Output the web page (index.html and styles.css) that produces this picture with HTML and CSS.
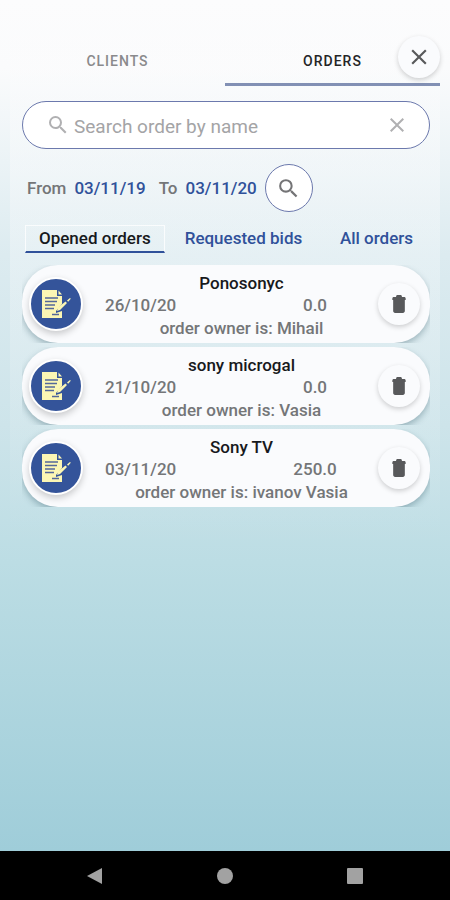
FILE: index.html
```html
<!DOCTYPE html>
<html lang="en">
<head>
<meta charset="utf-8">
<meta name="viewport" content="width=device-width, initial-scale=1">
<title>Orders</title>
<link rel="stylesheet" href="styles.css">
</head>
<body>
<svg class="defs" width="0" height="0" aria-hidden="true">
  <symbol id="search" viewBox="0 0 24 24"><path d="M15.5 14h-.79l-.28-.27A6.47 6.47 0 0 0 16 9.5 6.5 6.5 0 1 0 9.500 16c1.610 0 3.090-.59 4.230-1.570l.27.28v.79l5 4.990L20.490 19l-4.990-5zm-6 0C7.010 14 5 11.990 5 9.500S7.010 5 9.500 5 14 7.010 14 9.500 11.990 14 9.500 14z"/></symbol>
  <symbol id="close" viewBox="0 0 24 24"><path d="M19 6.410 17.590 5 12 10.590 6.410 5 5 6.410 10.590 12 5 17.590 6.410 19 12 13.410 17.590 19 19 17.590 13.410 12z"/></symbol>
  <symbol id="trash" viewBox="0 0 24 24"><path d="M4 5.500c0-1.500 1-2 2-2h2.500V3c0-1 .7-1.800 1.700-1.800h3.600c1 0 1.700.8 1.700 1.800v.5H18c1 0 2 .5 2 2v1.700H4zM5 7.200h14v13.300c0 1.300-1 2.300-2.300 2.300H7.300C6 22.800 5 21.800 5 20.500z"/></symbol>
  <symbol id="note" viewBox="0 0 30 30">
    <path class="paper" d="M1 1h15v6h5v8l-6 7v2l6-2v7H1z"/>
    <path class="paper" d="M17.500 1.500 21 5.500h-3.500z"/>
    <path class="ink" d="M4 9h13M4 12.500h12M4 16h10M4 19.500h9M11 25.500h7"/>
    <path class="pen" d="M17 18.500l7.500-6 1.500 1.500-7 7-3 1zM26 11.500l3-2.500.8.800-2.600 3z"/>
  </symbol>
</svg>
<main class="screen">
  <section class="panel">
    <nav class="tabs">
      <button class="tab" type="button">CLIENTS</button>
      <button class="tab tab-active" type="button">ORDERS</button>
      <button class="round close" type="button" aria-label="Close"><svg><use href="#close"/></svg></button>
    </nav>
    <div class="content">
      <form class="search">
        <svg><use href="#search"/></svg>
        <input type="text" placeholder="Search order by name" aria-label="Search order by name">
        <button type="button" aria-label="Clear search"><svg><use href="#close"/></svg></button>
      </form>
      <div class="range">
        <span>From</span><button class="date" type="button">03/11/19</button>
        <span class="to">To</span><button class="date" type="button">03/11/20</button>
        <button class="find" type="button" aria-label="Find by date"><svg><use href="#search"/></svg></button>
      </div>
      <div class="filters">
        <button class="filter filter-active" type="button">Opened orders</button>
        <button class="filter" type="button">Requested bids</button>
        <button class="filter filter-all" type="button">All orders</button>
      </div>
      <ul class="orders">
        <li class="slot"><article class="card">
          <span class="badge"><svg><use href="#note"/></svg></span>
          <div class="info"><h2>Ponosonyc</h2><p class="row"><time>26/10/20</time><span class="sum">0.0</span></p><p>order owner is: Mihail</p></div>
          <button class="round" type="button" aria-label="Delete Ponosonyc"><svg><use href="#trash"/></svg></button>
        </article></li>
        <li class="slot"><article class="card">
          <span class="badge"><svg><use href="#note"/></svg></span>
          <div class="info"><h2>sony microgal</h2><p class="row"><time>21/10/20</time><span class="sum">0.0</span></p><p>order owner is: Vasia</p></div>
          <button class="round" type="button" aria-label="Delete sony microgal"><svg><use href="#trash"/></svg></button>
        </article></li>
        <li class="slot"><article class="card">
          <span class="badge"><svg><use href="#note"/></svg></span>
          <div class="info"><h2>Sony TV</h2><p class="row"><time>03/11/20</time><span class="sum">250.0</span></p><p>order owner is: ivanov Vasia</p></div>
          <button class="round" type="button" aria-label="Delete Sony TV"><svg><use href="#trash"/></svg></button>
        </article></li>
      </ul>
    </div>
  </section>
</main>
<footer class="system">
  <button type="button" aria-label="Back"><svg viewBox="0 0 18 18"><path d="M1 9 16 1v16z"/></svg></button>
  <button type="button" aria-label="Home"><svg viewBox="0 0 18 18"><circle cx="9" cy="9" r="8"/></svg></button>
  <button type="button" aria-label="Recent apps"><svg viewBox="0 0 18 18"><rect x="1" y="1" width="16" height="16" rx="1"/></svg></button>
</footer>
</body>
</html>
```
FILE: styles.css
```css
* { box-sizing: border-box; }
body {
  margin: 0;
  min-height: 100vh;
  display: flex;
  flex-direction: column;
  font: 500 17px/22px Roboto, sans-serif;
  color: #747678;
}
button {
  border: 0;
  padding: 0;
  background: none;
  font: inherit;
  color: inherit;
}
svg { display: block; fill: currentColor; }
.defs { position: absolute; }
.screen {
  flex: 1;
  padding: 36px 10px 0;
  background: linear-gradient(#fcfcfd 0%, #fafbfc 8%, #dcebf0 30%, #cde4ea 50%, #bcdde4 66%, #9fcdd9 100%);
}
.panel {
  padding-bottom: 40px;
  background: linear-gradient(rgba(252, 252, 253, .3), rgba(252, 252, 253, .4) 20%, rgba(252, 252, 253, .2) 60%, rgba(252, 252, 253, 0));
}
.tabs { display: flex; position: relative; height: 50px; }
.tab {
  flex: 1;
  padding-top: 2px;
  font-size: 14px;
  letter-spacing: 1px;
  color: #8a8a8c;
  border-bottom: 3px solid transparent;
}
.tab-active { color: #252527; border-color: #8290b4; }
.round {
  flex: none;
  display: grid;
  place-items: center;
  width: 42px;
  height: 42px;
  border-radius: 50%;
  background: #fafbfd;
  color: #58595b;
  box-shadow: 0 2px 5px rgba(0, 0, 0, .18);
}
.round svg { width: 20px; height: 20px; }
.close { position: absolute; top: 0; right: 0; }
.close svg { width: 26px; height: 26px; }
.content { padding: 15px 10px 0 12px; }
.search {
  display: flex;
  align-items: center;
  height: 48px;
  padding: 0 20px 0 23px;
  border: 1px solid #6c79ad;
  border-radius: 24px;
  background: #fff;
  color: #b0b0b2;
}
.search svg { width: 24px; height: 24px; }
.search input {
  flex: 1;
  min-width: 0;
  border: 0;
  padding: 4px 4px 0;
  background: none;
  font: 400 19px/24px Roboto, sans-serif;
  outline: 0;
}
.search input::placeholder { color: #a4a4a6; opacity: 1; }
.range { display: flex; align-items: center; gap: 8px; margin-top: 15px; padding-left: 5px; }
.date, .filter { color: #30519a; }
.to { margin-left: 5px; }
.find {
  display: grid;
  place-items: center;
  width: 48px;
  height: 48px;
  border: 1px solid #6c79ad;
  border-radius: 50%;
  background: #fff;
  color: #747476;
}
.find svg { width: 25px; height: 25px; }
.filters { display: flex; gap: 20px; margin-top: 13px; padding: 0 17px 0 3px; }
.filter { height: 28px; padding-bottom: 1px; border-bottom: 2px solid transparent; }
.filter-active {
  padding: 0 13px 2px;
  border: 1px solid #fafcfd;
  border-bottom: 2px solid #30519a;
  color: #17191c;
}
.filter-all { margin-left: auto; }
.orders { list-style: none; margin: 12px 0 0; padding: 0; display: grid; gap: 4px; }
.slot { overflow: hidden; }
.card {
  display: flex;
  align-items: center;
  height: 78px;
  padding: 0 10px 0 7px;
  border-radius: 36px;
  background: #fafbfd;
  box-shadow: 0 3px 6px rgba(40, 80, 95, .35);
}
.badge {
  flex: none;
  display: grid;
  place-items: center;
  width: 54px;
  height: 54px;
  border: 2px solid #fff;
  border-radius: 50%;
  background: #34549a;
  box-shadow: 0 3px 7px rgba(0, 0, 0, .2);
}
.badge svg { width: 30px; height: 30px; }
.paper, .pen { fill: #fbf6b4; }
.ink { stroke: #54689a; stroke-width: 1.5; fill: none; }
.info { flex: 1; padding: 2px 0 0 22px; text-align: center; }
.info h2, .info p { margin: 0; font: inherit; }
.info h2 { color: #17191c; line-height: 22px; }
.info .row { display: flex; justify-content: space-between; padding-right: 29px; line-height: 23px; }
.sum { width: 68px; text-align: center; }
.system {
  display: flex;
  justify-content: space-between;
  align-items: center;
  height: 49px;
  padding: 0 86px;
  background: #000;
  color: #a2a2a2;
}
.system svg { width: 18px; height: 18px; }
```
